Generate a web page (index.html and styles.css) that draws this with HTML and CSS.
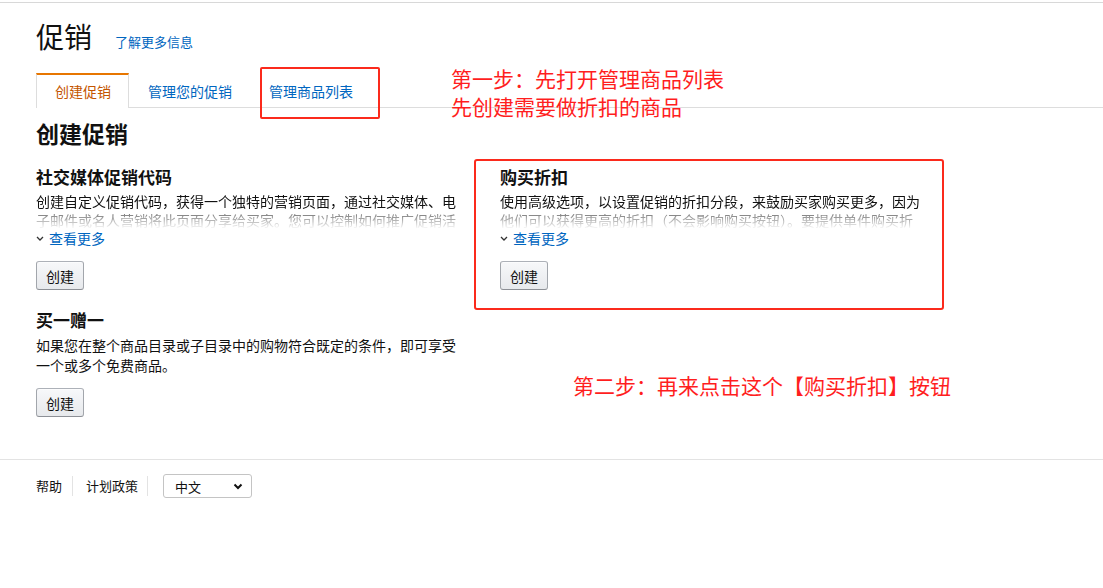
FILE: index.html
```html
<!DOCTYPE html>
<html lang="zh-CN">
<head>
<meta charset="utf-8">
<title>促销</title>
<link rel="stylesheet" href="styles.css">
</head>
<body>
<div class="topline"></div>
<div class="page">
  <div class="title-row">
    <h1 class="title">促销</h1>
    <a class="link learn" href="#">了解更多信息</a>
  </div>
  <div class="tabs">
    <div class="tab active">创建促销</div>
    <div class="tab">管理您的促销</div>
    <div class="tab marked">管理商品列表<span class="mark-box"></span></div>
  </div>
  <h2 class="section-title">创建促销</h2>
  <div class="cols">
    <div class="col">
      <div class="promo">
        <h3 class="promo-title">社交媒体促销代码</h3>
        <div class="desc clip">创建自定义促销代码，获得一个独特的营销页面，通过社交媒体、电子邮件或名人营销将此页面分享给买家。您可以控制如何推广促销活动，以及每位买家可以使用促销代码的次数。</div>
        <a class="more" href="#"><svg class="chev" width="8" height="5" viewBox="0 0 8 5"><path d="M1 1 L4 4 L7 1" fill="none" stroke="#333" stroke-width="1.3"/></svg><span class="link">查看更多</span></a>
        <button class="btn">创建</button>
      </div>
      <div class="promo second">
        <h3 class="promo-title">买一赠一</h3>
        <div class="desc">如果您在整个商品目录或子目录中的购物符合既定的条件，即可享受一个或多个免费商品。</div>
        <button class="btn">创建</button>
      </div>
    </div>
    <div class="col">
      <div class="promo boxed">
        <h3 class="promo-title">购买折扣</h3>
        <div class="desc clip">使用高级选项，以设置促销的折扣分段，来鼓励买家购买更多，因为他们可以获得更高的折扣（不会影响购买按钮）。要提供单件购买折扣，请在管理库存中设置促销价格。</div>
        <a class="more" href="#"><svg class="chev" width="8" height="5" viewBox="0 0 8 5"><path d="M1 1 L4 4 L7 1" fill="none" stroke="#333" stroke-width="1.3"/></svg><span class="link">查看更多</span></a>
        <button class="btn">创建</button>
      </div>
    </div>
  </div>
</div>
<div class="footer">
  <a class="foot-link" href="#">帮助</a>
  <span class="sep"></span>
  <a class="foot-link" href="#">计划政策</a>
  <span class="sep"></span>
  <span class="select-wrap">
    <select class="lang"><option>中文</option><option>English</option></select>
    <svg class="sel-chev" width="10" height="7" viewBox="0 0 10 7"><path d="M1.5 1.5 L5 5 L8.5 1.5" fill="none" stroke="#111" stroke-width="2"/></svg>
  </span>
</div>
<div class="note note1">第一步：先打开管理商品列表<br>先创建需要做折扣的商品</div>
<div class="note note2">第二步：再来点击这个【购买折扣】按钮</div>
</body>
</html>
```
FILE: styles.css
```css
* { box-sizing: border-box; }
html, body { margin: 0; padding: 0; background: #fff; }
body {
  font-family: "Noto Sans CJK SC", "Liberation Sans", Arial, sans-serif;
  color: #111;
  font-size: 14px;
  position: relative;
  width: 1103px;
  min-height: 588px;
}
.topline { height: 3px; border-bottom: 1px solid #d8d8d8; }
.page { padding-left: 36px; }
.title-row { display: flex; align-items: baseline; margin-top: 16px; height: 34px; }
.title { font-size: 28px; font-weight: 400; line-height: 34px; margin: 0; color: #111; }
.link { color: #0066c0; text-decoration: none; }
.learn { font-size: 13px; margin-left: 23px; position: relative; top: -1px; }
.tabs { display: flex; margin-top: 20px; border-bottom: 1px solid #ddd; height: 35px; }
.tab {
  height: 35px;
  padding: 0 18px;
  font-size: 14px;
  line-height: 32px;
  color: #0066c0;
  border-top: 2px solid transparent;
  border-left: 1px solid transparent;
  border-right: 1px solid transparent;
  position: relative;
}
.tab.active {
  color: #c45500;
  border-top-color: #e77600;
  border-left-color: #ddd;
  border-right-color: #ddd;
  background: #fff;
  padding: 0 17px 0 18px;
  height: 35px;
}
.tab.marked { padding-left: 17px; }
.mark-box {
  position: absolute;
  left: 8px;
  top: -8px;
  width: 120px;
  height: 52px;
  border: 2px solid #fb2a1c;
  border-radius: 2px;
}
.section-title { font-size: 23px; font-weight: 700; line-height: 30px; margin: 10px 0 0; }
.cols { display: grid; grid-template-columns: 422px 470px; column-gap: 16px; align-items: start; margin-top: 18px; }
.promo-title { font-size: 17px; font-weight: 700; line-height: 22px; margin: 0; }
.desc { font-size: 14px; line-height: 20px; margin-top: 4px; color: #111; }
.desc.clip {
  height: 38px;
  overflow: hidden;
  line-height: 19px;
  -webkit-mask-image: linear-gradient(to bottom, #000 0, #000 17px, rgba(0,0,0,0.55) 22px, rgba(0,0,0,0) 37px);
  mask-image: linear-gradient(to bottom, #000 0, #000 17px, rgba(0,0,0,0.55) 22px, rgba(0,0,0,0) 37px);
}
.more { display: flex; align-items: center; height: 16px; line-height: 16px; text-decoration: none; font-size: 14px; }
.chev { margin: 1px 5px 0 0; }
.btn {
  display: block;
  margin-top: 15px;
  height: 29px;
  padding: 0 9px;
  font-family: inherit;
  font-size: 14px;
  color: #111;
  background: linear-gradient(to bottom, #f7f8fa, #e7e9ec);
  border: 1px solid #adb1b8;
  border-color: #adb1b8 #a2a6ac #8d9096;
  border-radius: 3px;
  box-shadow: 0 1px 0 rgba(255,255,255,0.6) inset;
}
.promo.second { margin-top: 19px; }
.promo.second .btn { margin-top: 13px; }
.promo.boxed {
  margin-top: -7px;
  border: 2px solid #fb2a1c;
  border-radius: 3px;
  padding: 5px 20px 18px 24px;
}
.footer {
  margin-top: 42px;
  border-top: 1px solid #e3e3e3;
  padding: 14px 0 0 36px;
  display: flex;
  align-items: center;
  height: 39px;
}
.foot-link { font-size: 13px; color: #111; text-decoration: none; line-height: 20px; }
.sep { width: 1px; height: 20px; background: #e3e3e3; margin: 0 13px 0 10px; }
.sep + .foot-link + .sep { margin: 0 14px 0 9px; }
.select-wrap { position: relative; display: inline-block; margin-left: 1px; }
.lang {
  -webkit-appearance: none;
  appearance: none;
  width: 89px;
  height: 24px;
  border: 1px solid #c4c4c4;
  border-radius: 3px;
  background: #fff;
  font-family: inherit;
  font-size: 13px;
  color: #111;
  padding: 0 0 0 11px;
}
.sel-chev { position: absolute; right: 9px; top: 9px; pointer-events: none; }
.note {
  position: absolute;
  color: #ff1e1e;
  font-size: 21px;
  line-height: 28px;
  white-space: nowrap;
}
.note1 { left: 451px; top: 64px; }
.note2 { left: 573px; top: 371px; }
```
